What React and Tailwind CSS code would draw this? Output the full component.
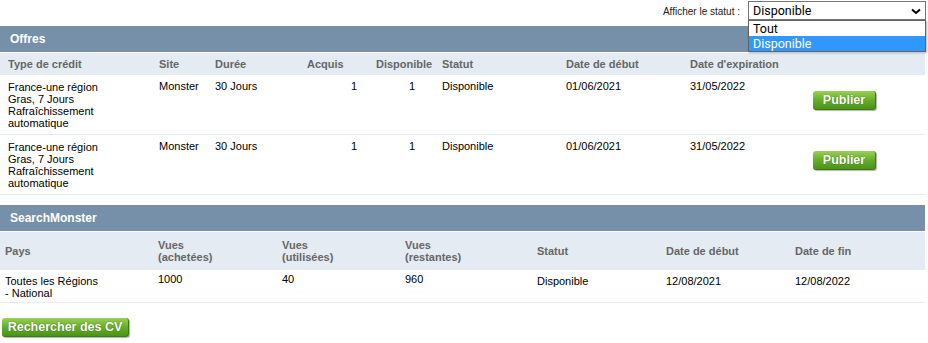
import React from "react";

const offres = [
  { type: ["France-une région", "Gras, 7 Jours", "Rafraîchissement", "automatique"], site: "Monster", duree: "30 Jours", acquis: 1, dispo: 1, statut: "Disponible", debut: "01/06/2021", fin: "31/05/2022" },
  { type: ["France-une région", "Gras, 7 Jours", "Rafraîchissement", "automatique"], site: "Monster", duree: "30 Jours", acquis: 1, dispo: 1, statut: "Disponible", debut: "01/06/2021", fin: "31/05/2022" },
];

const GreenButton = ({ children, className }) => (
  <button
    className={`h-[19px] rounded-[3px] border-b border-r border-[#3d7a14] bg-gradient-to-b from-[#9ad152] via-[#64ae2b] to-[#4a9318] text-[12.5px] font-bold leading-[18px] text-white [text-shadow:0_0_1px_#2f5f10] shadow-[1px_1px_1px_rgba(0,0,0,0.3)] ${className}`}
  >
    {children}
  </button>
);

const App = () => {
  return (
    <div className="relative h-[343px] w-[928px] overflow-hidden bg-white font-['Liberation_Sans',Arial,sans-serif] text-[11px] leading-[12px] text-black">
      <div className="flex h-[26px] items-start justify-end pr-[2px] pt-[1px]">
        <span className="mr-[8px] mt-[6px] text-[10px] leading-[10px] text-[#222]">Afficher le statut :</span>
        <div className="relative w-[178px]">
          <div className="flex h-[19px] items-center justify-between border border-[#767676] bg-white pl-[4px] pr-[4px] font-['Roboto',sans-serif] text-[12.5px] text-black">
            <span>Disponible</span>
            <svg width="10" height="7" viewBox="0 0 10 7" className="mt-[1px]">
              <path d="M1 1.5 L5 5 L9 1.5" fill="none" stroke="#000" strokeWidth="2" />
            </svg>
          </div>
          <div className="absolute left-0 top-[19px] z-10 w-full border border-[#646464] bg-white font-['Roboto',sans-serif] text-[12.5px] shadow-[1px_1px_2px_rgba(0,0,0,0.3)]">
            <div className="h-[15px] px-[4px] leading-[15px]">Tout</div>
            <div className="h-[15px] bg-[#3297fd] px-[4px] leading-[15px] text-white">Disponible</div>
          </div>
        </div>
      </div>

      <div className="w-[925px]">
        <div className="flex h-[26px] items-center bg-[#7590a8] pl-[10px] text-[12px] font-bold text-white">Offres</div>
        <table className="mt-px w-[925px] table-fixed border-collapse">
          <colgroup>
            <col className="w-[151px]" />
            <col className="w-[56px]" />
            <col className="w-[92px]" />
            <col className="w-[69px]" />
            <col className="w-[66px]" />
            <col className="w-[124px]" />
            <col className="w-[124px]" />
            <col className="w-[124px]" />
            <col className="w-[119px]" />
          </colgroup>
          <thead>
            <tr className="h-[22px] bg-[#e4ebf3] text-left font-bold text-[#666]">
              <th className="pl-[8px] font-bold">Type de crédit</th>
              <th className="pl-[8px] font-bold">Site</th>
              <th className="pl-[8px] font-bold">Durée</th>
              <th className="pl-[8px] font-bold">Acquis</th>
              <th className="pl-[8px] font-bold">Disponible</th>
              <th className="pl-[8px] font-bold">Statut</th>
              <th className="pl-[8px] font-bold">Date de début</th>
              <th className="pl-[8px] font-bold">Date d'expiration</th>
              <th></th>
            </tr>
          </thead>
          <tbody>
            {offres.map((o, i) => (
              <tr key={i} className="border-b border-[#e4ebf3] align-top">
                <td className="pb-[5px] pl-[8px] pt-[6px]">
                  {o.type.map((l) => (
                    <div key={l}>{l}</div>
                  ))}
                </td>
                <td className="pl-[8px] pt-[5px]">{o.site}</td>
                <td className="pl-[8px] pt-[5px]">{o.duree}</td>
                <td className="pr-[11px] pt-[5px] text-right">{o.acquis}</td>
                <td className="pr-[19px] pt-[5px] text-right">{o.dispo}</td>
                <td className="pl-[8px] pt-[5px]">{o.statut}</td>
                <td className="pl-[8px] pt-[5px]">{o.debut}</td>
                <td className="pl-[8px] pt-[5px]">{o.fin}</td>
                <td className="pl-[7px] pt-[16px]">
                  <GreenButton className="w-[63px]">Publier</GreenButton>
                </td>
              </tr>
            ))}
          </tbody>
        </table>

        <div className="mt-[10px] flex h-[26px] items-center bg-[#7590a8] pl-[10px] text-[12px] font-bold text-white">SearchMonster</div>
        <table className="mt-px w-[925px] table-fixed border-collapse">
          <colgroup>
            <col className="w-[153px]" />
            <col className="w-[124px]" />
            <col className="w-[123px]" />
            <col className="w-[132px]" />
            <col className="w-[129px]" />
            <col className="w-[129px]" />
            <col className="w-[135px]" />
          </colgroup>
          <thead>
            <tr className="h-[38px] bg-[#e4ebf3] text-left text-[#666]">
              <th className="pl-[5px] font-bold">Pays</th>
              <th className="pl-[5px] font-bold">Vues<br />(achetées)</th>
              <th className="pl-[5px] font-bold">Vues<br />(utilisées)</th>
              <th className="pl-[5px] font-bold">Vues<br />(restantes)</th>
              <th className="pl-[5px] font-bold">Statut</th>
              <th className="pl-[5px] font-bold">Date de début</th>
              <th className="pl-[5px] font-bold">Date de fin</th>
            </tr>
          </thead>
          <tbody>
            <tr className="border-b border-[#e4ebf3] align-top">
              <td className="pb-[3px] pl-[5px] pt-[5px]">Toutes les Régions<br />- National</td>
              <td className="pl-[5px] pt-[3px]">1000</td>
              <td className="pl-[5px] pt-[3px]">40</td>
              <td className="pl-[5px] pt-[3px]">960</td>
              <td className="pl-[5px] pt-[5px]">Disponible</td>
              <td className="pl-[5px] pt-[5px]">12/08/2021</td>
              <td className="pl-[5px] pt-[5px]">12/08/2022</td>
            </tr>
          </tbody>
        </table>

        <div className="mt-[15px] pl-[2px]">
          <GreenButton className="w-[127px]">Rechercher des CV</GreenButton>
        </div>
      </div>
    </div>
  );
};

export default App;
